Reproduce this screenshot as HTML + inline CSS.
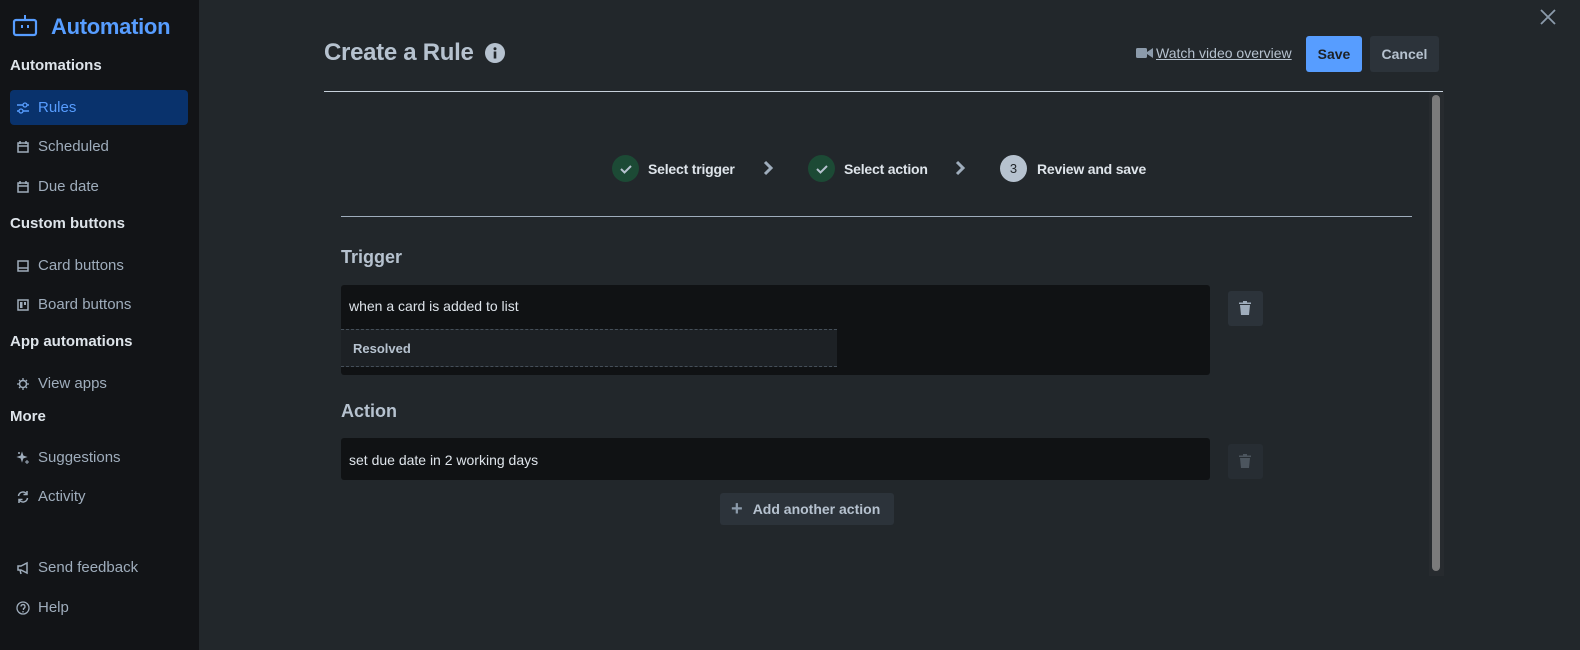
<!DOCTYPE html>
<html><head><style>
*{box-sizing:border-box;margin:0;padding:0}
body{width:1580px;height:650px;background:#22272b;font-family:"Liberation Sans",sans-serif;position:relative;overflow:hidden;color:#b6c2cf}
.sb{position:absolute;left:0;top:0;width:199px;height:650px;background:#121417}
.a{position:absolute}
.h{font-weight:bold;color:#dee4ea;font-size:15px;left:10px}
.it{left:10px;width:178px;height:35px;font-size:15px;color:#9fadbc;display:flex;align-items:center;padding-left:6px;border-radius:4px}
.it svg{width:14px;height:14px;margin-right:8px}
.box{background:#101214;border-radius:3px}
.btn{font-weight:bold;font-size:14px;display:flex;align-items:center;justify-content:center;border-radius:3px}
.chk{width:27px;height:27px;border-radius:50%;background:#1c4a35;display:flex;align-items:center;justify-content:center}
.st{font-weight:bold;font-size:14px;color:#dee4ea;letter-spacing:-0.2px}
</style></head><body>
<div class="sb">
 <svg class="a" style="left:12px;top:15px" width="26" height="22" viewBox="0 0 26 22"><rect x="2" y="5" width="22" height="15" rx="2" fill="none" stroke="#579dff" stroke-width="2.2"/><rect x="12" y="0" width="2" height="5" fill="#579dff"/><rect x="9" y="10" width="2" height="3" fill="#579dff"/><rect x="15" y="10" width="2" height="3" fill="#579dff"/></svg>
 <div class="a" style="left:51px;top:14px;font-size:22px;font-weight:bold;color:#579dff;letter-spacing:-0.3px">Automation</div>
 <div class="a h" style="top:57px">Automations</div>
 <div class="a it" style="top:90px;background:#09326c;color:#579dff"><svg viewBox="0 0 14 14"><path d="M1 4h12M1 10h12" stroke="#579dff" stroke-width="1.5"/><circle cx="9" cy="4" r="2" fill="#09326c" stroke="#579dff" stroke-width="1.3"/><circle cx="5" cy="10" r="2" fill="#09326c" stroke="#579dff" stroke-width="1.3"/></svg>Rules</div>
 <div class="a it" style="top:129px"><svg viewBox="0 0 14 14"><rect x="2" y="3" width="10" height="9" fill="none" stroke="#9fadbc" stroke-width="1.5"/><path d="M4 1v3M10 1v3M2 6h10" stroke="#9fadbc" stroke-width="1.5"/></svg>Scheduled</div>
 <div class="a it" style="top:169px"><svg viewBox="0 0 14 14"><rect x="2" y="3" width="10" height="9" fill="none" stroke="#9fadbc" stroke-width="1.5"/><path d="M4 1v3M10 1v3M2 6h10" stroke="#9fadbc" stroke-width="1.5"/></svg>Due date</div>
 <div class="a h" style="top:215px">Custom buttons</div>
 <div class="a it" style="top:248px"><svg viewBox="0 0 14 14"><rect x="2" y="2" width="10" height="10" fill="none" stroke="#9fadbc" stroke-width="1.5"/><path d="M2 9h10" stroke="#9fadbc" stroke-width="1.5"/></svg>Card buttons</div>
 <div class="a it" style="top:287px"><svg viewBox="0 0 14 14"><rect x="2" y="2" width="10" height="10" fill="none" stroke="#9fadbc" stroke-width="1.5"/><rect x="4" y="4" width="2.5" height="6" fill="#9fadbc"/><rect x="8" y="4" width="2" height="3" fill="#9fadbc"/></svg>Board buttons</div>
 <div class="a h" style="top:333px">App automations</div>
 <div class="a it" style="top:366px"><svg viewBox="0 0 14 14"><circle cx="7" cy="7" r="3.5" fill="none" stroke="#9fadbc" stroke-width="1.5"/><path d="M7 1v2M7 11v2M1 7h2M11 7h2M3 3l1.4 1.4M9.6 9.6L11 11M3 11l1.4-1.4M9.6 4.4L11 3" stroke="#9fadbc" stroke-width="1.3"/></svg>View apps</div>
 <div class="a h" style="top:408px">More</div>
 <div class="a it" style="top:440px"><svg viewBox="0 0 14 14"><path d="M6 2l1 3 3 1-3 1-1 3-1-3-3-1 3-1zM11 9v4M9 11h4M3 1v2M2 2h2" stroke="#9fadbc" stroke-width="1" fill="#9fadbc"/></svg>Suggestions</div>
 <div class="a it" style="top:479px"><svg viewBox="0 0 14 14"><path d="M2.5 6a4.5 4.5 0 0 1 8.5-1.5M11.5 8a4.5 4.5 0 0 1-8.5 1.5M11 1v3.5H7.5M3 13V9.5h3.5" fill="none" stroke="#9fadbc" stroke-width="1.5"/></svg>Activity</div>
 <div class="a it" style="top:550px"><svg viewBox="0 0 14 14"><path d="M2 5h3l6-3v10L5 9H2zM4 9l1 4" fill="none" stroke="#9fadbc" stroke-width="1.5"/></svg>Send feedback</div>
 <div class="a it" style="top:590px"><svg viewBox="0 0 14 14"><circle cx="7" cy="7" r="6" fill="none" stroke="#9fadbc" stroke-width="1.3"/><path d="M5 5.5a2 2 0 1 1 2.5 2V9" fill="none" stroke="#9fadbc" stroke-width="1.3"/><circle cx="7" cy="10.8" r=".8" fill="#9fadbc"/></svg>Help</div>
</div>

<div class="a" style="left:324px;top:39px;font-size:24px;font-weight:bold;color:#b6c2cf;letter-spacing:-0.3px">Create a Rule</div>
<svg class="a" style="left:485px;top:43px" width="20" height="20" viewBox="0 0 20 20"><circle cx="10" cy="10" r="10" fill="#b6c2cf"/><rect x="8.7" y="8.5" width="2.6" height="7" fill="#22272b"/><circle cx="10" cy="5.7" r="1.5" fill="#22272b"/></svg>
<svg class="a" style="left:1136px;top:47px" width="17" height="12" viewBox="0 0 17 12"><rect x="0" y="1" width="11" height="10" rx="1.5" fill="#8c9bab"/><path d="M11 5l6-4v10l-6-4z" fill="#8c9bab"/></svg>
<div class="a" style="left:1156px;top:45px;font-size:14px;color:#b6c2cf;text-decoration:underline">Watch video overview</div>
<div class="a btn" style="left:1306px;top:36px;width:56px;height:36px;background:#579dff;color:#1d2125">Save</div>
<div class="a btn" style="left:1370px;top:36px;width:69px;height:36px;background:#2c333a;color:#b6c2cf">Cancel</div>
<svg class="a" style="left:1540px;top:9px" width="16" height="16" viewBox="0 0 16 16"><path d="M1 1l14 14M15 1L1 15" stroke="#8c9bab" stroke-width="1.8"/></svg>
<div class="a" style="left:324px;top:91px;width:1119px;height:1px;background:#c7d1db"></div>
<div class="a" style="left:1429px;top:92px;width:15px;height:484px;background:#272b2f"></div>
<div class="a" style="left:1432px;top:95px;width:8px;height:476px;border-radius:4px;background:#7b7b7b"></div>

<div class="a chk" style="left:612px;top:155px"><svg width="14" height="14" viewBox="0 0 14 14"><path d="M2 7l3.5 3.5L12 4" fill="none" stroke="#b6c2cf" stroke-width="2"/></svg></div>
<div class="a st" style="left:648px;top:161px">Select trigger</div>
<svg class="a" style="left:762px;top:160px" width="12" height="16" viewBox="0 0 12 16"><path d="M3 2l6 6-6 6" fill="none" stroke="#9fadbc" stroke-width="3"/></svg>
<div class="a chk" style="left:808px;top:155px"><svg width="14" height="14" viewBox="0 0 14 14"><path d="M2 7l3.5 3.5L12 4" fill="none" stroke="#b6c2cf" stroke-width="2"/></svg></div>
<div class="a st" style="left:844px;top:161px">Select action</div>
<svg class="a" style="left:954px;top:160px" width="12" height="16" viewBox="0 0 12 16"><path d="M3 2l6 6-6 6" fill="none" stroke="#9fadbc" stroke-width="3"/></svg>
<div class="a chk" style="left:1000px;top:155px;background:#b6c2cf;color:#22272b;font-size:13px">3</div>
<div class="a st" style="left:1037px;top:161px">Review and save</div>
<div class="a" style="left:341px;top:216px;width:1071px;height:1px;background:#9fadbc"></div>

<div class="a" style="left:341px;top:247px;font-size:18px;font-weight:bold;color:#b6c2cf">Trigger</div>
<div class="a box" style="left:341px;top:285px;width:869px;height:90px"></div>
<div class="a" style="left:349px;top:298px;font-size:14px;color:#dee4ea">when a card is added to list</div>
<div class="a" style="left:341px;top:329px;width:496px;height:38px;background:#1d2125;border-top:1px dashed #454f59;border-bottom:1px dashed #454f59"></div>
<div class="a" style="left:353px;top:341px;font-size:13px;font-weight:bold;color:#b6c2cf">Resolved</div>
<div class="a" style="left:1228px;top:291px;width:35px;height:35px;border-radius:3px;background:#2c333a"></div>
<svg class="a" style="left:1238px;top:301px" width="14" height="15" viewBox="0 0 14 15"><rect x="1" y="1.5" width="12" height="1.5" fill="#9fadbc"/><rect x="5" y="0" width="4" height="2" fill="#9fadbc"/><path d="M2 4h10l-1 10H3z" fill="#9fadbc"/></svg>

<div class="a" style="left:341px;top:401px;font-size:18px;font-weight:bold;color:#b6c2cf">Action</div>
<div class="a box" style="left:341px;top:438px;width:869px;height:42px"></div>
<div class="a" style="left:349px;top:452px;font-size:14px;color:#dee4ea">set due date in 2 working days</div>
<div class="a" style="left:1228px;top:444px;width:35px;height:35px;border-radius:3px;background:#272d33"></div>
<svg class="a" style="left:1238px;top:454px" width="14" height="15" viewBox="0 0 14 15"><rect x="1" y="1.5" width="12" height="1.5" fill="#4c555e"/><rect x="5" y="0" width="4" height="2" fill="#4c555e"/><path d="M2 4h10l-1 10H3z" fill="#4c555e"/></svg>
<div class="a btn" style="left:720px;top:493px;width:174px;height:32px;background:#2c333a;color:#b6c2cf;justify-content:flex-start;padding-left:11px"><span style="font-size:20px;margin-right:10px;color:#8c9bab">+</span>Add another action</div>
</body></html>
